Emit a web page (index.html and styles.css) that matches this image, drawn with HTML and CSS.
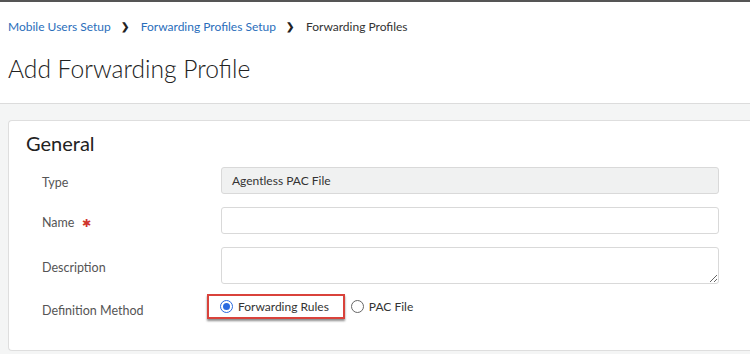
FILE: index.html
```html
<!DOCTYPE html>
<html lang="en">
<head>
    <meta charset="UTF-8">
    <title>Add Forwarding Profile</title>
    <link rel="stylesheet" href="styles.css">
</head>
<body>
    <header class="page-header">
        <nav class="breadcrumb">
            <a href="#">Mobile Users Setup</a>
            <span class="sep">&#x276F;</span>
            <a href="#">Forwarding Profiles Setup</a>
            <span class="sep">&#x276F;</span>
            <span class="current">Forwarding Profiles</span>
        </nav>
        <h1>Add Forwarding Profile</h1>
    </header>

    <main class="content">
        <section class="card">
            <h2>General</h2>
            <div class="form">
                <label class="label">Type</label>
                <div class="field readonly">Agentless PAC File</div>

                <label class="label">Name <span class="req">&#x2731;</span></label>
                <input class="field" type="text">

                <label class="label">Description</label>
                <textarea class="field area"></textarea>

                <label class="label">Definition Method</label>
                <div class="radios">
                    <label class="radio highlight"><span class="dot checked"></span>Forwarding Rules</label>
                    <label class="radio"><span class="dot"></span>PAC File</label>
                </div>
            </div>
        </section>
    </main>
</body>
</html>
```

FILE: styles.css
```css
* {
    box-sizing: border-box;
    margin: 0;
    padding: 0;
}

body {
    background-color: #f4f5f5;
    border-top: 2px solid #555;
    font-family: Lato, "Open Sans", sans-serif;
    height: 354px;
    overflow: hidden;
}

.page-header {
    background-color: #fff;
    border-bottom: 1px solid #dcdcdc;
    height: 102px;
    padding: 15px 8px 0;
}

.breadcrumb {
    align-items: center;
    display: flex;
    font-size: 12px;
    height: 18px;
}

.breadcrumb a {
    color: #2a6ebb;
    text-decoration: none;
}

.breadcrumb .current {
    color: #333;
}

.breadcrumb .sep {
    color: #222;
    font-size: 10px;
    font-weight: bold;
    margin: 0 12px 0 10px;
}

.page-header h1 {
    color: #222;
    font-size: 24.6px;
    font-weight: 300;
    margin-top: 19px;
}

.content {
    padding: 16px 0 0 8px;
}

.card {
    background-color: #fff;
    border: 1px solid #dedede;
    border-right: none;
    border-radius: 4px 0 0 4px;
    height: 231px;
    padding: 10px 0 0 17px;
}

.card h2 {
    color: #222;
    font-size: 20px;
    font-weight: 400;
}

.form {
    align-items: center;
    display: grid;
    grid-template-columns: 179px 498px;
    margin-top: 12px;
    padding-left: 16px;
    row-gap: 13px;
}

.label {
    color: #555;
    font-size: 12.5px;
    padding-top: 4px;
}

.req {
    color: #d0342c;
    font-size: 11px;
    margin-left: 4px;
}

.field {
    background-color: #fff;
    border: 1px solid #d9d9d9;
    border-radius: 3px;
    color: #333;
    font-family: inherit;
    font-size: 12px;
    height: 27px;
    padding: 0 10px;
}

.field.readonly {
    align-items: center;
    background-color: #f0f1f1;
    display: flex;
}

.field.area {
    display: block;
    height: 37px;
    resize: vertical;
}

.radios {
    align-items: center;
    display: flex;
    margin-left: -14px;
    margin-top: -3px;
}

.radio {
    align-items: center;
    color: #333;
    display: flex;
    flex-shrink: 0;
    font-size: 12px;
    height: 25px;
    white-space: nowrap;
}

.radio.highlight {
    border: 2px solid #d9423b;
    box-shadow: 0 2px 2px rgba(0, 0, 0, 0.45);
    padding: 0 14px 0 11px;
}

.radio + .radio {
    padding-left: 6px;
}

.dot {
    border: 1px solid #666;
    border-radius: 50%;
    height: 13px;
    margin-right: 5px;
    position: relative;
    width: 13px;
}

.dot.checked {
    border-color: #2a6ae0;
}

.dot.checked::after {
    background-color: #2a6ae0;
    border-radius: 50%;
    content: "";
    height: 7px;
    left: 2px;
    position: absolute;
    top: 2px;
    width: 7px;
}
```
